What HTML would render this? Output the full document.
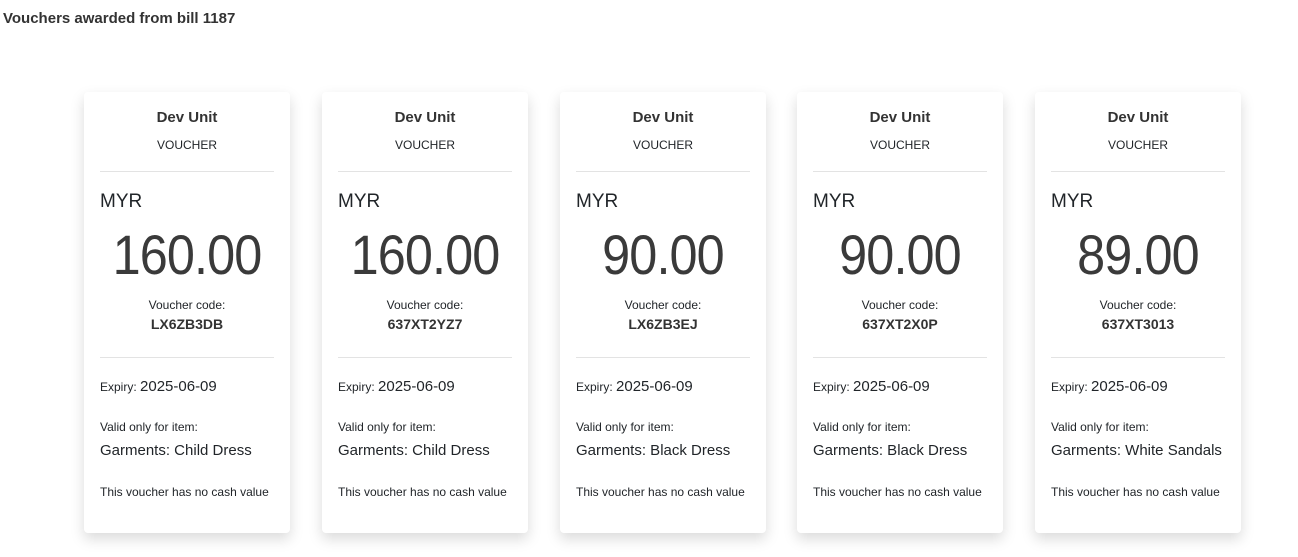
<!DOCTYPE html>
<html><head><style>
body{margin:0;width:1298px;height:557px;background:#fff;font-family:"Liberation Sans",sans-serif;color:#212529;position:relative;overflow:hidden}
.t{position:absolute;left:3px;top:10px;font-size:15px;font-weight:bold;color:#333}
.c{position:absolute;top:92px;width:206px;height:441px;background:#fff;border-radius:4px;box-shadow:0 6px 14px rgba(0,0,0,0.15)}
.c div{position:absolute;white-space:nowrap}
.ctr{left:0;right:0;text-align:center}
.l{left:16px}
.hr{left:16px;right:16px;height:1px;background:#e3e3e3}
.amt{top:130px;font-size:56px;letter-spacing:-1px;color:#3a3a3a;transform:scaleX(0.9)}
</style></head><body>
<div class="t">Vouchers awarded from bill 1187</div>
<div class="c" style="left:84px">
<div class="ctr" style="top:17px;font-size:15px;font-weight:bold;color:#333">Dev Unit</div>
<div class="ctr" style="top:46px;font-size:12px">VOUCHER</div>
<div class="hr" style="top:79px"></div>
<div class="l" style="top:99px;font-size:19px">MYR</div>
<div class="ctr amt">160.00</div>
<div class="ctr" style="top:206px;font-size:12px">Voucher code:</div>
<div class="ctr" style="top:224px;font-size:14px;font-weight:bold;color:#333">LX6ZB3DB</div>
<div class="hr" style="top:265px"></div>
<div class="l" style="top:286px;font-size:12px">Expiry: <span style="font-size:15px">2025-06-09</span></div>
<div class="l" style="top:328px;font-size:12px">Valid only for item:</div>
<div class="l" style="top:350px;font-size:15px">Garments: Child Dress</div>
<div class="l" style="top:393px;font-size:12px">This voucher has no cash value</div>
</div>
<div class="c" style="left:322px">
<div class="ctr" style="top:17px;font-size:15px;font-weight:bold;color:#333">Dev Unit</div>
<div class="ctr" style="top:46px;font-size:12px">VOUCHER</div>
<div class="hr" style="top:79px"></div>
<div class="l" style="top:99px;font-size:19px">MYR</div>
<div class="ctr amt">160.00</div>
<div class="ctr" style="top:206px;font-size:12px">Voucher code:</div>
<div class="ctr" style="top:224px;font-size:14px;font-weight:bold;color:#333">637XT2YZ7</div>
<div class="hr" style="top:265px"></div>
<div class="l" style="top:286px;font-size:12px">Expiry: <span style="font-size:15px">2025-06-09</span></div>
<div class="l" style="top:328px;font-size:12px">Valid only for item:</div>
<div class="l" style="top:350px;font-size:15px">Garments: Child Dress</div>
<div class="l" style="top:393px;font-size:12px">This voucher has no cash value</div>
</div>
<div class="c" style="left:560px">
<div class="ctr" style="top:17px;font-size:15px;font-weight:bold;color:#333">Dev Unit</div>
<div class="ctr" style="top:46px;font-size:12px">VOUCHER</div>
<div class="hr" style="top:79px"></div>
<div class="l" style="top:99px;font-size:19px">MYR</div>
<div class="ctr amt">90.00</div>
<div class="ctr" style="top:206px;font-size:12px">Voucher code:</div>
<div class="ctr" style="top:224px;font-size:14px;font-weight:bold;color:#333">LX6ZB3EJ</div>
<div class="hr" style="top:265px"></div>
<div class="l" style="top:286px;font-size:12px">Expiry: <span style="font-size:15px">2025-06-09</span></div>
<div class="l" style="top:328px;font-size:12px">Valid only for item:</div>
<div class="l" style="top:350px;font-size:15px">Garments: Black Dress</div>
<div class="l" style="top:393px;font-size:12px">This voucher has no cash value</div>
</div>
<div class="c" style="left:797px">
<div class="ctr" style="top:17px;font-size:15px;font-weight:bold;color:#333">Dev Unit</div>
<div class="ctr" style="top:46px;font-size:12px">VOUCHER</div>
<div class="hr" style="top:79px"></div>
<div class="l" style="top:99px;font-size:19px">MYR</div>
<div class="ctr amt">90.00</div>
<div class="ctr" style="top:206px;font-size:12px">Voucher code:</div>
<div class="ctr" style="top:224px;font-size:14px;font-weight:bold;color:#333">637XT2X0P</div>
<div class="hr" style="top:265px"></div>
<div class="l" style="top:286px;font-size:12px">Expiry: <span style="font-size:15px">2025-06-09</span></div>
<div class="l" style="top:328px;font-size:12px">Valid only for item:</div>
<div class="l" style="top:350px;font-size:15px">Garments: Black Dress</div>
<div class="l" style="top:393px;font-size:12px">This voucher has no cash value</div>
</div>
<div class="c" style="left:1035px">
<div class="ctr" style="top:17px;font-size:15px;font-weight:bold;color:#333">Dev Unit</div>
<div class="ctr" style="top:46px;font-size:12px">VOUCHER</div>
<div class="hr" style="top:79px"></div>
<div class="l" style="top:99px;font-size:19px">MYR</div>
<div class="ctr amt">89.00</div>
<div class="ctr" style="top:206px;font-size:12px">Voucher code:</div>
<div class="ctr" style="top:224px;font-size:14px;font-weight:bold;color:#333">637XT3013</div>
<div class="hr" style="top:265px"></div>
<div class="l" style="top:286px;font-size:12px">Expiry: <span style="font-size:15px">2025-06-09</span></div>
<div class="l" style="top:328px;font-size:12px">Valid only for item:</div>
<div class="l" style="top:350px;font-size:15px">Garments: White Sandals</div>
<div class="l" style="top:393px;font-size:12px">This voucher has no cash value</div>
</div>
</body></html>
